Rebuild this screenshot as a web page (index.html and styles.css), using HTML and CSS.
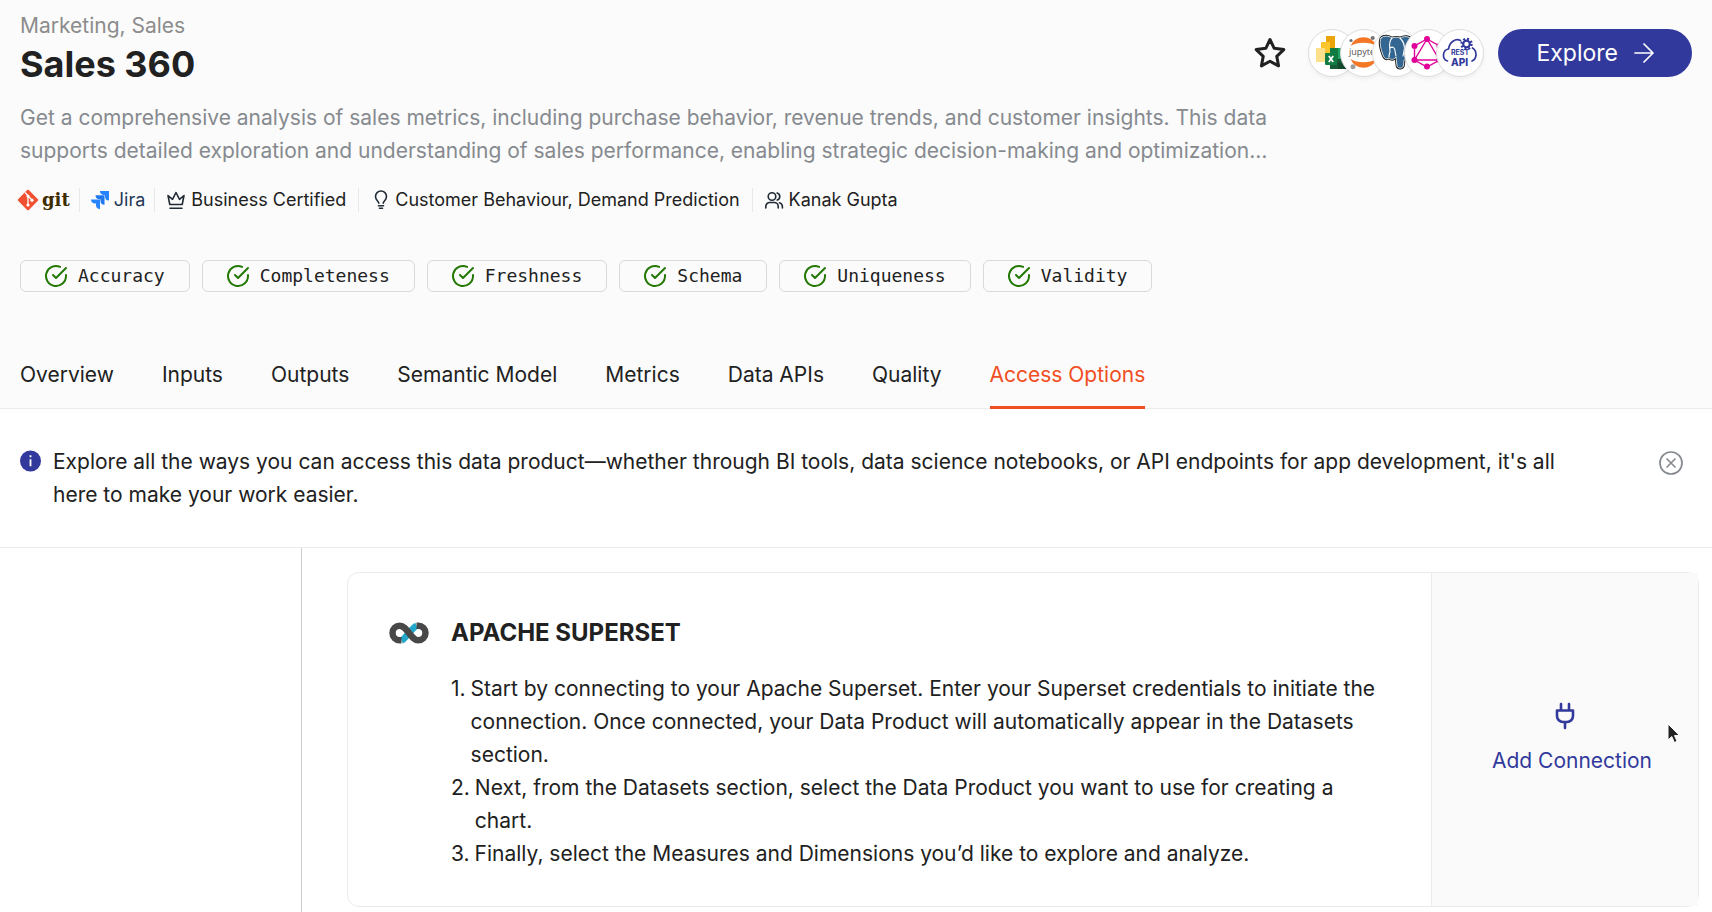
FILE: index.html
```html
<!DOCTYPE html>
<html lang="en">
<head>
<meta charset="utf-8">
<title>Sales 360</title>
<link rel="stylesheet" href="styles.css">
</head>
<body>
<svg class="sprite" aria-hidden="true">
  <symbol id="check" viewBox="0 0 24 24"><path d="M22 11.08V12a10 10 0 1 1-5.93-9.14"/><path d="M22 4 12 14.01l-3-3"/></symbol>
</svg>

<header class="header">
  <div class="top">
    <div class="heading">
      <p class="domain">Marketing, Sales</p>
      <h1 class="title">Sales 360</h1>
    </div>
    <div class="actions">
      <button class="star" type="button" aria-label="Favourite">
        <svg width="36" height="36" viewBox="0 0 24 24" fill="none" stroke="currentColor" stroke-width="2" stroke-linejoin="round"><path d="M12 3l2.8 5.9 6.4.8-4.7 4.5 1.2 6.4L12 17.500l-5.700 3.100 1.200-6.400-4.700-4.500 6.400-.8z"/></svg>
      </button>
      <div class="tools">
        <span class="tool">
          <svg width="46" height="46" viewBox="1 1 46 46">
            <rect x="18" y="7" width="9" height="22" fill="#eba40a"/>
            <rect x="13" y="13" width="9" height="19" fill="#fbc52e"/>
            <rect x="8" y="19" width="9" height="14" fill="#fde08c"/>
            <rect x="22" y="19" width="16" height="21" rx="1" fill="#21a366"/>
            <rect x="22" y="19" width="8" height="11" fill="#107c41"/>
            <rect x="22" y="30" width="16" height="10" fill="#185c37"/>
            <rect x="30" y="34" width="8" height="6" fill="#134a2c"/>
            <rect x="17" y="24" width="12" height="12" rx="1" fill="#107c41"/>
            <path d="M20.800 27l4.400 6M25.200 27l-4.400 6" stroke="#fff" stroke-width="1.700"/>
          </svg>
        </span>
        <span class="tool">
          <svg width="46" height="46" viewBox="1 1 46 46">
            <path d="M10.500 17a14 14 0 0 1 26 0a19 12 0 0 0-26 0zM10.500 30a14 14 0 0 0 26 0a19 12 0 0 1-26 0z" fill="#f37726"/>
            <circle cx="11" cy="11.500" r="1.600" fill="#6f6f70"/><circle cx="32.700" cy="9" r="2.100" fill="#767677"/><circle cx="13" cy="37.700" r="2.500" fill="#9e9e9e"/>
            <text x="9" y="26" class="jupyter">jupyter</text>
          </svg>
        </span>
        <span class="tool">
          <svg width="46" height="46" viewBox="1 1 46 46" stroke-linejoin="round" stroke-linecap="round">
            <path d="M9 9c3-3 8-2 11 0 3-1 6-1 8 0 4-2 9-2 11 1 2 5-2 13-5 17l4 1c-1 3-4 3-6 3l-.4 5c-.4 4-5.600 4-6.600 1l-1-9c-2 3-5 3-7 1-3 2-5 0-6-3-2-5-4-13-2-17z" fill="#336791" stroke="#111" stroke-width="2.600"/>
            <path d="M9 9c3-3 8-2 11 0 3-1 6-1 8 0 4-2 9-2 11 1 2 5-2 13-5 17l4 1c-1 3-4 3-6 3l-.4 5c-.4 4-5.600 4-6.600 1l-1-9c-2 3-5 3-7 1-3 2-5 0-6-3-2-5-4-13-2-17z" fill="#336791" stroke="#fff" stroke-width=".8"/>
            <path d="M20 9c-4 4-2 10-2 14-1 2-1 3-1 5M28 9c4 4 5 9 4 13l-1 5M18 19c3-2 5 0 5 3l1 5" fill="none" stroke="#fff" stroke-width="1.100"/>
          </svg>
        </span>
        <span class="tool">
          <svg width="46" height="46" viewBox="1 1 46 46">
            <path d="M23 10l12.500 7v14L23 38l-12.500-7V17zM23 10L10.500 31h25z" fill="none" stroke="#e10098" stroke-width="1.400"/>
            <g fill="#e10098"><circle cx="23" cy="10" r="3"/><circle cx="35.500" cy="17" r="3"/><circle cx="35.500" cy="31" r="3"/><circle cx="23" cy="37.500" r="3"/><circle cx="10.500" cy="31" r="3"/><circle cx="10.500" cy="17" r="3"/></g>
          </svg>
        </span>
        <span class="tool">
          <svg width="46" height="46" viewBox="1 1 46 46">
            <g fill="none" stroke="#32399c" stroke-width="1.700" stroke-linecap="round">
              <path d="M11.500 32c-6-2-5-11 1-12 1-7 7-11 12-8.500M36.500 19c5 3 4.500 11-.5 13"/>
              <circle cx="30.500" cy="15" r="3.300" stroke-width="2.200"/>
              <circle cx="30.500" cy="15" r="5" stroke-width="2.400" stroke-dasharray="1.960 1.960" stroke-linecap="butt"/>
            </g>
            <text x="15" y="26" class="rest">REST</text>
            <text x="15" y="37" class="api">API</text>
          </svg>
        </span>
      </div>
      <button class="explore" type="button">Explore
        <svg width="20" height="20" viewBox="0 0 20 20" fill="none" stroke="currentColor" stroke-width="1.700" stroke-linecap="round" stroke-linejoin="round"><path d="M1 10h18M10 1l9 9-9 9"/></svg>
      </button>
    </div>
  </div>

  <p class="description">Get a comprehensive analysis of sales metrics, including purchase behavior, revenue trends, and customer insights. This data supports detailed exploration and understanding of sales performance, enabling strategic decision-making and optimization…</p>

  <ul class="meta">
    <li class="meta-item meta-git">
      <svg width="22" height="22" viewBox="0 0 22 22"><rect x="3.400" y="3.400" width="15.200" height="15.200" rx="1.200" transform="rotate(45 11 11)" fill="#f05133"/><path d="M8 3.500l3 3v9.500M11 7l4 4" stroke="#fff" stroke-width="1.300" fill="none"/><g fill="#fff"><circle cx="11" cy="7" r="1.600"/><circle cx="11" cy="16" r="1.600"/><circle cx="15" cy="11.200" r="1.600"/></g></svg>
      <span class="git-word">git</span>
    </li>
    <li class="meta-item meta-jira">
      <svg width="18" height="18" viewBox="0 0 18 18"><path d="M9 0h9v9.500a4 4 0 0 1-4-4V4h-1.500A4 4 0 0 1 9 0z" fill="#2684ff"/><path d="M4.500 4.300h9v9.500a4 4 0 0 1-4-4V8.300H8a4 4 0 0 1-3.500-4z" fill="#1f78f0"/><path d="M0 8.600h9V18a4 4 0 0 1-4-4v-1.500H3.600A4 4 0 0 1 0 8.600z" fill="#2684ff"/></svg>
      <span class="jira-word">Jira</span>
    </li>
    <li class="meta-item">
      <svg class="line-icon" width="20" height="20" viewBox="0 0 20 20"><path d="M2 5.500l1.800 9h12.400l1.800-9-4.500 3.800L10 2.500 6.500 9.300zM4 18.300h12"/></svg>
      Business Certified
    </li>
    <li class="meta-item meta-idea">
      <svg class="line-icon" width="14" height="20" viewBox="0 0 14 20"><path d="M4.800 13.200c0-2-3.300-3-3.300-6.700a5.500 5.500 0 0 1 11 0c0 3.700-3.300 4.700-3.300 6.700M4.500 15.700h5M5.500 18.300h3"/></svg>
      Customer Behaviour, Demand Prediction
    </li>
    <li class="meta-item">
      <svg class="line-icon" width="20" height="20" viewBox="0 0 20 20"><circle cx="8" cy="6.500" r="3.800"/><path d="M1.800 18v-1.500a4 4 0 0 1 4-4h4.400a4 4 0 0 1 4 4V18M13.200 2.900a3.800 3.800 0 0 1 0 7.200M15.500 12.700a4 4 0 0 1 2.900 3.800V18"/></svg>
      Kanak Gupta
    </li>
  </ul>

  <ul class="checks">
    <li class="check"><svg class="check-icon"><use href="#check"/></svg>Accuracy</li>
    <li class="check"><svg class="check-icon"><use href="#check"/></svg>Completeness</li>
    <li class="check"><svg class="check-icon"><use href="#check"/></svg>Freshness</li>
    <li class="check"><svg class="check-icon"><use href="#check"/></svg>Schema</li>
    <li class="check"><svg class="check-icon"><use href="#check"/></svg>Uniqueness</li>
    <li class="check"><svg class="check-icon"><use href="#check"/></svg>Validity</li>
  </ul>

  <nav class="tabs">
    <a class="tab" href="#">Overview</a>
    <a class="tab" href="#">Inputs</a>
    <a class="tab" href="#">Outputs</a>
    <a class="tab" href="#">Semantic Model</a>
    <a class="tab" href="#">Metrics</a>
    <a class="tab" href="#">Data APIs</a>
    <a class="tab" href="#">Quality</a>
    <a class="tab tab-active" href="#" aria-current="page">Access Options</a>
  </nav>
</header>

<section class="banner">
  <svg class="info" width="22" height="22" viewBox="0 0 22 22"><circle cx="10.500" cy="11" r="10.500" fill="#32399c"/><path d="M10.500 9.300v7M10.500 5.300v2" stroke="#fff" stroke-width="1.800"/></svg>
  <p class="banner-text">Explore all the ways you can access this data product—whether through BI tools, data science notebooks, or API endpoints for app development, it's all here to make your work easier.</p>
  <button class="close" type="button" aria-label="Dismiss">
    <svg width="24" height="24" viewBox="0 0 24 24" fill="none" stroke="currentColor" stroke-width="1.700" stroke-linecap="round"><circle cx="12" cy="12" r="11"/><path d="M8 8l8 8M16 8l-8 8"/></svg>
  </button>
</section>

<div class="body">
  <aside class="side"></aside>
  <main class="main">
    <article class="card">
      <div class="card-info">
        <svg class="superset" width="40" height="22" viewBox="0 0 40 22" fill="none" stroke-width="6.500">
          <path d="M12.500 18.500C17 16.500 23 5.500 27.500 3.700" stroke="#20a7c9"/>
          <path d="M27.500 3.700h1.700a7.300 7.300 0 0 1 0 14.600C22 18.300 18 3.700 10.800 3.700a7.300 7.300 0 0 0 0 14.600h1.700" stroke="#484848"/>
        </svg>
        <div class="card-text">
          <h2 class="card-title">APACHE SUPERSET</h2>
          <ol class="steps">
            <li class="step"><span>1.</span><p class="step-text">Start by connecting to your Apache Superset. Enter your Superset credentials to initiate the connection. Once connected, your Data Product will automatically appear in the Datasets section.</p></li>
            <li class="step"><span>2.</span><p class="step-text">Next, from the Datasets section, select the Data Product you want to use for creating a chart.</p></li>
            <li class="step"><span>3.</span><p class="step-text">Finally, select the Measures and Dimensions you’d like to explore and analyze.</p></li>
          </ol>
        </div>
      </div>
      <div class="card-side">
        <svg width="20" height="28" viewBox="0 0 20 28" fill="none" stroke="#32399c" stroke-width="2.600" stroke-linecap="round" stroke-linejoin="round"><path d="M6 2v6M14 2v6M2 8.500h16v5.500a6 6 0 0 1-6 6H8a6 6 0 0 1-6-6zM10 20v6"/></svg>
        <button class="connect" type="button">Add Connection</button>
        <svg class="pointer" width="16" height="22" viewBox="0 0 16 22"><path d="M2 1v16l3.800-3.400 2.600 5.900 2.700-1.200-2.600-5.700h5z" fill="#222" stroke="#fff" stroke-width="1"/></svg>
      </div>
    </article>
  </main>
</div>
</body>
</html>
```
FILE: styles.css
```css
* { box-sizing: border-box; }

body {
  margin: 0;
  min-height: 100vh;
  display: flex;
  flex-direction: column;
  background: #fff;
  color: #212121;
  font: 21px/33px Inter, "Liberation Sans", sans-serif;
}

h1, h2, p, ul, ol { margin: 0; padding: 0; }
ul, ol { list-style: none; }
svg { display: block; flex: none; }
button { border: 0; padding: 0; background: none; font: inherit; color: inherit; cursor: pointer; }

.sprite { position: absolute; width: 0; height: 0; }

.header {
  padding: 9px 20px 0;
  background: #fbfbfb;
  border-bottom: 1px solid #ebebeb;
}

.top { display: flex; justify-content: space-between; align-items: flex-start; }
.domain { color: #8c8c8c; }
.title { font-size: 36px; line-height: 44px; font-weight: 700; }

.actions { display: flex; align-items: center; padding-top: 20px; gap: 14px; }
.star { margin-right: 6px; }
.tools { display: flex; }
.tool {
  width: 48px;
  height: 48px;
  border: 1px solid #dedede;
  border-radius: 50%;
  background: #fff;
  overflow: hidden;
  box-shadow: 0 2px 4px rgba(0, 0, 0, .05);
}
.tool + .tool { margin-left: -16px; }
.jupyter { font: 9px "Open Sans", sans-serif; fill: #4e4e4e; }
.rest { font: 700 7px Inter, sans-serif; fill: #32399c; }
.api { font: 800 10px Inter, sans-serif; fill: #32399c; }

.explore {
  display: flex;
  align-items: center;
  gap: 16px;
  height: 48px;
  padding: 0 38px;
  border-radius: 24px;
  background: #32399c;
  color: #fff;
  font-size: 23px;
}

.description { max-width: 1256px; margin-top: 15px; color: #868a8f; }

.meta {
  display: flex;
  align-items: center;
  margin-top: 21px;
  font-size: 18px;
  line-height: 24px;
}
.meta-item { display: flex; align-items: center; gap: 5px; padding: 0 12px 0 11px; }
.meta-item + .meta-item { border-left: 1px solid #e8e8e8; }
.meta-git { gap: 3px; padding: 0 9px 0 0; margin-left: -3px; }
.meta-jira { padding-right: 9px; }
.meta-item.meta-idea { gap: 7px; padding-left: 15px; }
.git-word { font: 700 18px/22px "DejaVu Serif", serif; color: #3e2c00; }
.jira-word { color: #253858; }
.line-icon { fill: none; stroke: #212b36; stroke-width: 1.6; stroke-linecap: round; stroke-linejoin: round; }

.checks { display: flex; gap: 12px; margin-top: 48px; }
.check {
  display: flex;
  align-items: center;
  gap: 10px;
  height: 32px;
  padding: 0 24px 0 23px;
  border: 1px solid #d9d9d9;
  border-radius: 6px;
  font: 18px/24px "DejaVu Sans Mono", monospace;
}
.check-icon { width: 24px; height: 24px; fill: none; stroke: #237804; stroke-width: 2; stroke-linecap: round; stroke-linejoin: round; }

.tabs { display: flex; gap: 48px; margin: 48px 0 -1px; }
.tab { padding: 18px 0 15px; border-bottom: 3px solid transparent; color: inherit; text-decoration: none; }
.tab-active { color: #f04e23; border-color: #f04e23; }

.banner {
  display: flex;
  align-items: flex-start;
  padding: 36px 29px 36px 20px;
  border-bottom: 1px solid #ebebeb;
}
.info { margin: 5px 11px 0 0; }
.banner-text { flex: 1; }
.close { margin: 6px 0 0 90px; color: #868a8f; }

.body { flex: 1; display: flex; }
.side { flex: none; width: 302px; border-right: 1px solid #ccc; }
.main { flex: 1; padding: 24px 13px 5px 45px; }

.card { display: flex; border: 1px solid #ebebeb; border-radius: 12px; }
.card-info { flex: 1; display: flex; gap: 22px; padding: 42px 40px 36px 41px; }
.superset { margin-top: 7px; }
.card-text { flex: 1; }
.card-title { font-size: 24px; line-height: 36px; font-weight: 700; }
.steps { margin-top: 21px; }
.step { display: flex; gap: 5px; }
.step-text { flex: 1; }

.card-side {
  position: relative;
  flex: none;
  display: flex;
  flex-direction: column;
  align-items: center;
  justify-content: center;
  gap: 14px;
  width: 267px;
  border-left: 1px solid #ebebeb;
  background: #fafafa;
}
.connect { padding-left: 14px; color: #32399c; }
.pointer { position: absolute; left: 88%; top: 45%; }
```
